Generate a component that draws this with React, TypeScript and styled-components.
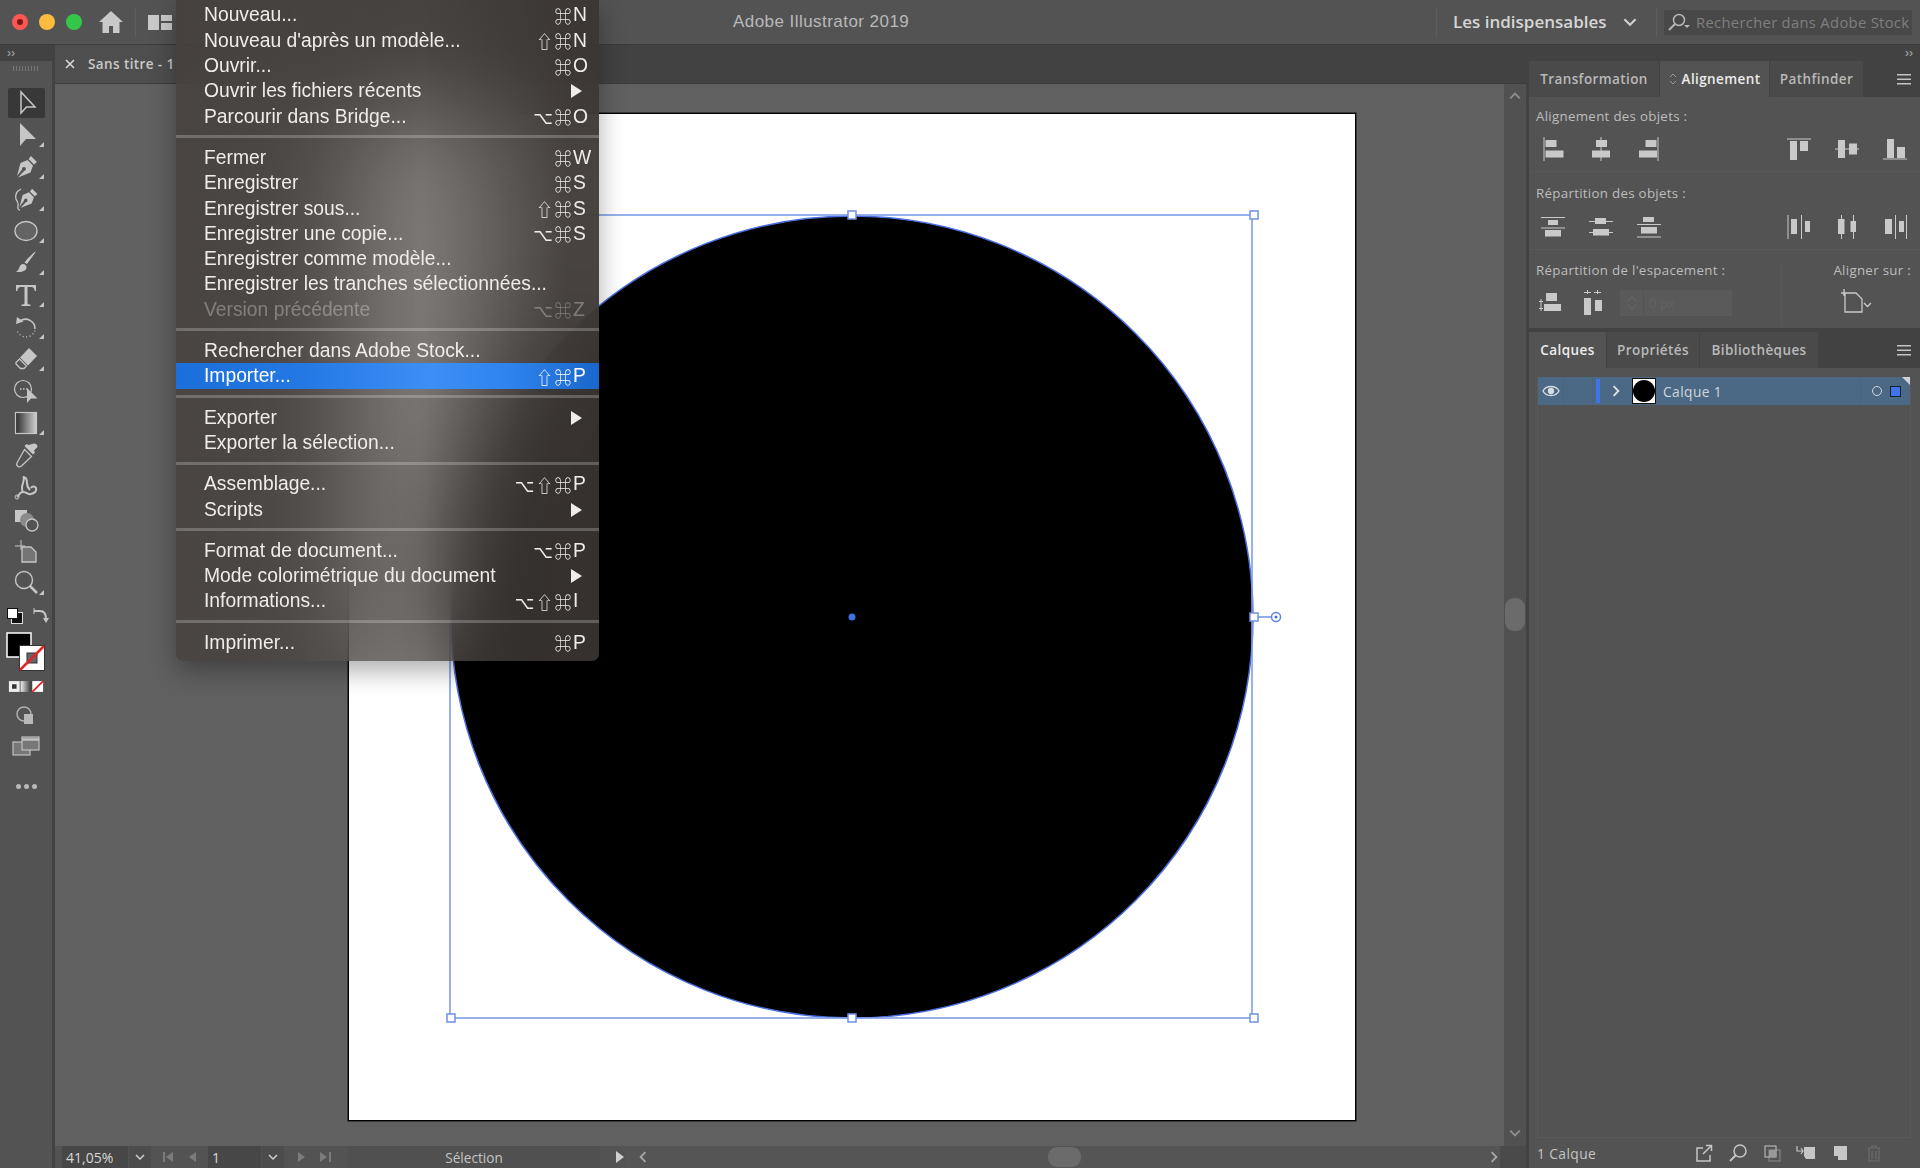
import React from 'react';
import styled, { createGlobalStyle } from 'styled-components';

const ICON = '#c6c6c6';

const GlobalStyle = createGlobalStyle`
  html, body { margin: 0; padding: 0; background: #535353; }
  * { box-sizing: border-box; }
`;

type MenuItem = { label: string; mods?: string; letter?: string; sub?: boolean; disabled?: boolean; active?: boolean };

const MENU: MenuItem[][] = [
  [
    { label: 'Nouveau...', mods: '⌘', letter: 'N' },
    { label: "Nouveau d'après un modèle...", mods: '⇧⌘', letter: 'N' },
    { label: 'Ouvrir...', mods: '⌘', letter: 'O' },
    { label: 'Ouvrir les fichiers récents', sub: true },
    { label: 'Parcourir dans Bridge...', mods: '⌥⌘', letter: 'O' },
  ],
  [
    { label: 'Fermer', mods: '⌘', letter: 'W' },
    { label: 'Enregistrer', mods: '⌘', letter: 'S' },
    { label: 'Enregistrer sous...', mods: '⇧⌘', letter: 'S' },
    { label: 'Enregistrer une copie...', mods: '⌥⌘', letter: 'S' },
    { label: 'Enregistrer comme modèle...' },
    { label: 'Enregistrer les tranches sélectionnées...' },
    { label: 'Version précédente', mods: '⌥⌘', letter: 'Z', disabled: true },
  ],
  [
    { label: 'Rechercher dans Adobe Stock...' },
    { label: 'Importer...', mods: '⇧⌘', letter: 'P', active: true },
  ],
  [
    { label: 'Exporter', sub: true },
    { label: 'Exporter la sélection...' },
  ],
  [
    { label: 'Assemblage...', mods: '⌥⇧⌘', letter: 'P' },
    { label: 'Scripts', sub: true },
  ],
  [
    { label: 'Format de document...', mods: '⌥⌘', letter: 'P' },
    { label: 'Mode colorimétrique du document', sub: true },
    { label: 'Informations...', mods: '⌥⇧⌘', letter: 'I' },
  ],
  [{ label: 'Imprimer...', mods: '⌘', letter: 'P' }],
];

const Page = styled.div`
  position: relative;
  width: 1920px;
  height: 1168px;
  overflow: hidden;
  display: flex;
  flex-direction: column;
  background: #3a3a3a;
  font-family: "Open Sans", "Liberation Sans", sans-serif;
`;

const TitleBar = styled.header`
  height: 45px;
  flex: none;
  display: flex;
  align-items: center;
  background: #535353;
  border-bottom: 1px solid #3c3c3c;
  padding-left: 12px;
`;

const Light = styled.span<{ $c: string; $dot?: boolean }>`
  width: 16px;
  height: 16px;
  border-radius: 50%;
  margin-right: 11px;
  background: ${p => p.$c};
  display: flex;
  align-items: center;
  justify-content: center;
  &::after {
    content: '';
    width: 6px;
    height: 6px;
    border-radius: 50%;
    background: ${p => (p.$dot ? '#7a1712' : 'transparent')};
  }
`;

const VRule = styled.span<{ $ml: number }>`
  width: 1px;
  height: 30px;
  flex: none;
  margin-left: ${p => p.$ml}px;
  background: #5d5d5d;
`;

const AppTitle = styled.div`
  margin-left: 561px;
  width: 180px;
  font-family: "Liberation Sans", sans-serif;
  font-size: 17px;
  letter-spacing: 0.45px;
  color: #b9b9b9;
  white-space: nowrap;
`;

const Workspace = styled.div`
  margin: 0 0 2px 16px;
  width: 170px;
  flex: none;
  font-size: 17px;
  font-weight: 600;
  color: #d6d6d6;
  white-space: nowrap;
`;

const SearchBox = styled.div`
  margin-left: 7px;
  width: 248px;
  height: 25px;
  flex: none;
  display: flex;
  align-items: center;
  gap: 5px;
  padding-left: 3px;
  background: #484848;
  border-radius: 2px;
  font-size: 14.8px;
  letter-spacing: 0.3px;
  color: #7f7f7f;
  white-space: nowrap;
  overflow: hidden;
`;

const Body = styled.div`
  flex: 1;
  min-height: 0;
  display: flex;
`;

const ToolBar = styled.aside`
  width: 55px;
  flex: none;
  display: flex;
  flex-direction: column;
  align-items: center;
  background: #535353;
  border-right: 3px solid #424242;
`;

const Collapse = styled.div<{ $align: string }>`
  align-self: stretch;
  height: 16px;
  flex: none;
  display: flex;
  align-items: center;
  justify-content: ${p => p.$align};
  padding: 0 7px;
  background: #424242;
  color: #b0b0b0;
  font-size: 12px;
  line-height: 1;
  font-family: "Liberation Sans", sans-serif;
`;

const Grip = styled.div`
  width: 26px;
  height: 5px;
  margin: 5px 0 16px;
  background: repeating-linear-gradient(90deg, #777 0 1px, transparent 1px 3px);
`;

const Tool = styled.div<{ $active?: boolean; $more?: boolean }>`
  position: relative;
  width: 37px;
  height: 30px;
  margin: 1px 0;
  flex: none;
  display: flex;
  align-items: center;
  justify-content: center;
  border-radius: 2px;
  background: ${p => (p.$active ? '#383838' : 'transparent')};
  &::after {
    content: ${p => (p.$more ? "''" : 'none')};
    position: absolute;
    right: 1px;
    bottom: 3px;
    border-style: solid;
    border-width: 0 0 5px 5px;
    border-color: transparent transparent #c6c6c6 transparent;
  }
`;

const SwapRow = styled.div`
  width: 45px;
  height: 22px;
  margin: 6px 0 0 5px;
  display: flex;
  align-items: center;
  justify-content: space-between;
`;

const ColorBlock = styled.svg`
  display: block;
  margin: 5px 0 0 2px;
  width: 44px;
  height: 42px;
`;

const ModeRow = styled.svg`
  display: block;
  margin-top: 6px;
  width: 36px;
  height: 13px;
`;

const DrawMode = styled.div<{ $mt: number }>`
  margin-top: ${p => p.$mt}px;
  height: 26px;
`;

const Dots = styled.div`
  margin-top: 24px;
  display: flex;
  gap: 3px;
  span {
    width: 5px;
    height: 5px;
    border-radius: 50%;
    background: #b8b8b8;
  }
`;

const Center = styled.main`
  flex: 1;
  min-width: 0;
  display: flex;
  flex-direction: column;
`;

const DocTabs = styled.div`
  height: 39px;
  flex: none;
  display: flex;
  background: #424242;
  border-bottom: 1px solid #3c3c3c;
`;

const DocTab = styled.div`
  width: 240px;
  display: flex;
  align-items: center;
  padding-left: 10px;
  gap: 13px;
  background: #4e4e4e;
  color: #c9c9c9;
  font-size: 13.5px;
  font-weight: 600;
  letter-spacing: 0.4px;
  white-space: nowrap;
`;

const CanvasRow = styled.div`
  flex: 1;
  min-height: 0;
  display: flex;
`;

const Canvas = styled.div`
  flex: 1;
  padding: 29px 0 0 293px;
  background: #606060;
`;

const Artboard = styled.div`
  width: 1008px;
  height: 1008px;
  background: #fff;
  border: 1px solid #000;
  box-shadow: 0 0 0 0.5px #111;
  svg { display: block; }
`;

const VScroll = styled.div`
  width: 22px;
  flex: none;
  display: flex;
  flex-direction: column;
  align-items: center;
  justify-content: space-between;
  padding: 6px 0 7px;
  background: #515151;
`;

const VThumb = styled.div`
  width: 20px;
  height: 33px;
  border-radius: 9px;
  background: #6b6b6b;
`;

const StatusBar = styled.footer`
  height: 22px;
  flex: none;
  display: flex;
  align-items: stretch;
  padding-left: 7px;
  background: #535353;
  color: #d8d8d8;
  font-size: 14px;
`;

const Field = styled.div<{ $w: number; $ml?: number }>`
  width: ${p => p.$w}px;
  margin-left: ${p => p.$ml || 0}px;
  display: flex;
  align-items: center;
  padding-left: 4px;
  background: #474747;
`;

const Drop = styled.div`
  width: 22px;
  margin-left: 1px;
  display: flex;
  align-items: center;
  justify-content: center;
  background: #4c4c4c;
`;

const Pager = styled.div<{ $w: number; $ml: number }>`
  width: ${p => p.$w}px;
  margin-left: ${p => p.$ml}px;
  display: flex;
  align-items: center;
  justify-content: space-between;
`;

const StateLabel = styled.div`
  width: 252px;
  margin-left: 17px;
  display: flex;
  align-items: center;
  justify-content: center;
  background: #505050;
  color: #c4c4c4;
  font-size: 13.6px;
`;

const HTrack = styled.div`
  flex: 1;
  display: flex;
  align-items: center;
  justify-content: space-between;
  padding-left: 12px;
  background: #555;
`;

const HThumb = styled.div`
  width: 33px;
  height: 20px;
  margin-left: -9px;
  border-radius: 9px;
  background: #6b6b6b;
`;

const HEnd = styled.div`
  width: 26px;
  align-self: stretch;
  background: #4a4a4a;
`;

const Dock = styled.aside`
  width: 394px;
  flex: none;
  display: flex;
  flex-direction: column;
  background: #424242;
  border-left: 3px solid #424242;
`;

const PanelTabs = styled.div`
  height: 36px;
  flex: none;
  display: flex;
  align-items: stretch;
  background: #424242;
`;

const PanelTab = styled.div<{ $w: number; $active?: boolean }>`
  width: ${p => p.$w}px;
  display: flex;
  align-items: center;
  justify-content: center;
  gap: 5px;
  margin-right: 1px;
  background: ${p => (p.$active ? '#535353' : '#4a4a4a')};
  color: ${p => (p.$active ? '#ececec' : '#b9b9b9')};
  font-size: 13.5px;
  font-weight: 600;
  letter-spacing: 0.4px;
  white-space: nowrap;
`;

const Hamburger = styled.svg`
  margin: auto 9px auto auto;
  width: 14px;
  height: 11px;
`;

const DockGap = styled.div`
  height: 4px;
  flex: none;
`;

const AlignPanel = styled.section`
  height: 231px;
  flex: none;
  display: flex;
  flex-direction: column;
  background: #535353;
`;

const AlignSection = styled.div<{ $h: number; $pt: number; $gap: number }>`
  height: ${p => p.$h}px;
  flex: none;
  padding-top: ${p => p.$pt}px;
  border-bottom: 1px solid #585858;
  & > div:first-child {
    margin-bottom: ${p => p.$gap}px;
  }
`;

const PanelLabel = styled.div`
  height: 18px;
  padding-left: 7px;
  line-height: 18px;
  font-size: 13.3px;
  letter-spacing: 0.3px;
  color: #bdbdbd;
  white-space: nowrap;
`;

const IconRow = styled.div`
  display: flex;
  gap: 22px;
  padding: 0 12px 0 11px;
  svg:nth-child(3) { margin-right: auto; }
`;

const SpacingRow = styled.div`
  display: flex;
  height: 78px;
  padding-top: 11px;
`;

const SpacingLeft = styled.div`
  width: 253px;
  flex: none;
  border-right: 1px solid #585858;
  height: 66px;
`;

const SpacingRight = styled.div`
  flex: 1;
  padding-right: 9px;
  text-align: right;
  svg { display: block; margin: 10px 0 0 58px; }
`;

const SpacingControls = styled.div`
  display: flex;
  align-items: center;
  margin-top: 11px;
  padding-left: 10px;
  gap: 13px;
  svg + svg { margin-left: 3px; }
`;

const SpinField = styled.div`
  width: 112px;
  height: 26px;
  display: flex;
  align-items: center;
  background: #5a5a5a;
  color: #636363;
  font-size: 13px;
  span:first-child {
    width: 24px;
    height: 100%;
    border-right: 1px solid #535353;
    display: flex;
    align-items: center;
    justify-content: center;
  }
  span:last-child { padding-left: 5px; }
`;

const LayersPanel = styled.section`
  flex: 1;
  min-height: 0;
  display: flex;
  flex-direction: column;
  background: #535353;
`;

const LayerList = styled.div`
  flex: 1;
  margin: 9px 9px 0 8px;
  border: 1px solid #595959;
  border-top: none;
`;

const LayerRow = styled.div`
  position: relative;
  height: 28px;
  display: flex;
  align-items: center;
  background: #4b6885;
  color: #d0d6dc;
  font-size: 13.8px;
  letter-spacing: 0.4px;
  &::after {
    content: '';
    position: absolute;
    top: 0;
    right: 0;
    border-style: solid;
    border-width: 0 8px 8px 0;
    border-color: transparent #cfd3d8 transparent transparent;
  }
`;

const LayerCell = styled.div<{ $w: number; $line?: boolean }>`
  width: ${p => p.$w}px;
  height: 100%;
  flex: none;
  display: flex;
  align-items: center;
  justify-content: center;
  border-right: ${p => (p.$line ? '1px solid #476380' : 'none')};
`;

const ColorBar = styled.span`
  width: 4px;
  height: 24px;
  margin-left: 3px;
  flex: none;
  background: #3f73e8;
`;

const Thumb = styled.span`
  width: 24px;
  height: 26px;
  flex: none;
  display: flex;
  align-items: center;
  justify-content: center;
  background: #fff;
  border: 1px solid #111;
  &::after {
    content: '';
    width: 22px;
    height: 22px;
    border-radius: 50%;
    background: #000;
  }
`;

const LayerName = styled.span`
  margin-left: 7px;
  flex: 1;
`;

const TargetRing = styled.span`
  width: 10px;
  height: 10px;
  margin: 0 8px 0 11px;
  flex: none;
  border-radius: 50%;
  border: 1px solid #d2d6da;
`;

const SelectSquare = styled.span`
  width: 11px;
  height: 11px;
  margin-right: 9px;
  flex: none;
  background: #3f73e8;
  border: 1px solid #15202e;
`;

const LayerDivider = styled.span`
  width: 1px;
  height: 100%;
  background: #476380;
`;

const LayersFooter = styled.div`
  height: 30px;
  flex: none;
  display: flex;
  align-items: center;
  padding: 0 36px 0 8px;
  color: #c4c4c4;
  font-size: 13.8px;
  letter-spacing: 0.4px;
`;

const FooterIcons = styled.div`
  margin-left: auto;
  display: flex;
  gap: 14px;
`;

const Menu = styled.nav`
  position: absolute;
  top: 0;
  left: 176px;
  width: 423px;
  padding: 2.35px 0 6px;
  background: linear-gradient(90deg, rgba(66, 60, 56, 0.74) 0%, rgba(66, 60, 56, 0.68) 58%, rgba(58, 53, 50, 0.93) 92%);
  backdrop-filter: blur(52px);
  border-radius: 0 0 7px 7px;
  box-shadow: 0 10px 26px rgba(0, 0, 0, 0.32);
  font-family: "Liberation Sans", sans-serif;
  font-size: 19.3px;
  color: #efecea;
`;

const MenuSep = styled.div`
  height: 16px;
  display: flex;
  align-items: center;
  &::after {
    content: '';
    flex: 1;
    height: 3px;
    background: rgba(255, 255, 255, 0.22);
  }
`;

const MenuRow = styled.div<{ $active?: boolean; $disabled?: boolean }>`
  height: 25.3px;
  display: flex;
  align-items: center;
  padding: 1px 0 0 28px;
  white-space: nowrap;
  background: ${p => (p.$active ? 'linear-gradient(90deg, #1b6fdb 0%, #2478e4 30%, #3c8ff6 60%, #2f84ee 78%, #1a67cc 100%)' : 'transparent')};
  color: ${p => (p.$active ? '#fff' : p.$disabled ? 'rgba(255,255,255,0.3)' : 'inherit')};
`;

const MenuLabel = styled.span`
  flex: 1;
`;

const Mods = styled.span`
  font-family: "Noto Sans CJK JP", "DejaVu Sans", sans-serif;
  font-size: 17px;
  letter-spacing: 1.500px;
`;

const KeyLetter = styled.span`
  width: 26px;
  flex: none;
`;

const SubArrow = styled.span`
  margin-right: 17px;
  border-style: solid;
  border-width: 7px 0 7px 11px;
  border-color: transparent transparent transparent #efecea;
`;

const Ico: React.FC<{ s?: number; children: React.ReactNode }> = ({ s = 28, children }) => (
  <svg width={s} height={s} viewBox={`0 0 ${s} ${s}`} fill={ICON}>
    {children}
  </svg>
);

const nib = 'M19 3l6 6-3 2.500-5.500-5.500zM15.500 7l5.500 5.500-2.500 7L6 24.500l6-6.500a2 2 0 1 0-2-1.500L5 23l3.500-13z';

const TOOLS: { icon: React.ReactNode; more?: boolean; active?: boolean }[] = [
  { active: true, icon: <Ico><path d="M9 3v21l5.500-6H23z" fill="none" stroke={ICON} strokeWidth="1.500" /></Ico> },
  { more: true, icon: <Ico><path d="M8 2v23l6-7h10z" /></Ico> },
  { more: true, icon: <Ico><path d={nib} /></Ico> },
  { more: true, icon: <Ico><path d={nib} transform="translate(3 1) scale(.9)" /><path d="M9 4c-4 2-6 6-5 10 1 3 3 4 2 7-.5 2 0 4 2 4" fill="none" stroke={ICON} strokeWidth="1.300" /></Ico> },
  { more: true, icon: <Ico><ellipse cx="14" cy="14" rx="11" ry="9.500" fill="#646464" stroke={ICON} strokeWidth="1.300" /></Ico> },
  { more: true, icon: <Ico><path d="M24 2c-2 4-7 10-9 13l-2.500-1.500C15 10 20 5 24 2zM11 15c2 0 3.500 1.500 3.500 3.500C14.500 21 11 23.500 4 23c2.500-1.500 2.500-3 3.500-5 .6-2 2-3 3.500-3z" /></Ico> },
  { more: true, icon: <Ico><path d="M4 4h20v6h-1.300c-.2-2.500-1.200-4-3.700-4h-3.500v16c0 1 .8 1.500 3 1.500V25H9.500v-1.500c2.200 0 3-.5 3-1.500V6H9c-2.500 0-3.500 1.500-3.700 4H4z" /></Ico> },
  { more: true, icon: <Ico><path d="M8 8a9.500 9.500 0 0 1 15 8" fill="none" stroke={ICON} strokeWidth="1.500" /><path d="M4 11l1-7 6.500 4.500z" /><path d="M23 17.500a9.500 9.500 0 0 1-18 0" fill="none" stroke={ICON} strokeWidth="1.300" strokeDasharray="1 2.500" /></Ico> },
  { more: true, icon: <Ico><path d="M17 3l8 8-9 9.500-8-8z" /><path d="M7.500 14l7 7-2.500 2.500H8.500L4 19v-1.500z" fill="none" stroke={ICON} strokeWidth="1.300" /></Ico> },
  { icon: <Ico><circle cx="11" cy="12" r="8.500" fill="none" stroke={ICON} strokeWidth="1.200" /><path d="M8 12h7" stroke={ICON} strokeWidth="1.500" strokeDasharray="1.500 1.500" /><path d="M15 11v15l4-4.500h6.500z" /></Ico> },
  { more: true, icon: <Ico><defs><linearGradient id="grad"><stop offset="0" stopColor="#2c2c2c" /><stop offset="1" stopColor="#d0d0d0" /></linearGradient></defs><rect x="3.500" y="3.500" width="21" height="21" fill="url(#grad)" stroke={ICON} strokeWidth="1.200" /></Ico> },
  { icon: <Ico><path d="M22 2.500a3.200 3.200 0 0 1 3.500 3.500l-3.500 3.500 1 2-2 2-8.500-8.500 2-2 2 1z" /><path d="M12.500 8.500l7 7-10 9.500c-1.500 1-3 1-4 0s-1-2.500 0-4z" fill="none" stroke={ICON} strokeWidth="1.300" /></Ico> },
  { icon: <Ico><path d="M5 24c3-2 2-5 6-5s4 3 8 2 6-3 5-6c-1-2-4-2-5 0M11 19c-2-3-1-6 0-9 .5-3 2-5 0-6 3 0 4 3 4 6 0 3 1 5 3 7" fill="none" stroke={ICON} strokeWidth="2" /><circle cx="5" cy="24" r="2" fill="none" stroke={ICON} /></Ico> },
  { icon: <Ico><rect x="3" y="5" width="12" height="12" /><circle cx="15" cy="15" r="7" fill="#8a8a8a" /><circle cx="20" cy="20" r="6" fill="#535353" stroke={ICON} strokeWidth="1.300" /></Ico> },
  { icon: <Ico><path d="M3 9h10M9 3v10" fill="none" stroke={ICON} strokeWidth="1" /><path d="M10 10h9l5 5v10H10z" fill="#757575" stroke={ICON} strokeWidth="1.300" /></Ico> },
  { more: true, icon: <Ico><circle cx="12" cy="11" r="8.500" fill="none" stroke={ICON} strokeWidth="1.400" /><path d="M18 17l7 7" stroke={ICON} strokeWidth="2.500" /></Ico> },
];

// each icon of the align panel: small rects x,y,w,h
type Bars = [number, number, number, number][];

const ALIGN: Bars[] = [
  [[3.500, 1, 1, 24], [5.500, 4, 11, 7], [5.500, 14.500, 18, 7]],
  [[12.500, 1, 1, 24], [8, 4, 11, 7], [4, 14.500, 18, 7]],
  [[21.500, 1, 1, 24], [9.500, 4, 11, 7], [3, 14.500, 18, 7]],
  [[1, 2.500, 24, 1], [4, 5, 7, 19], [14, 5, 8, 10]],
  [[1, 12.500, 24, 1], [4, 4, 7, 18], [15, 7.500, 8, 11]],
  [[1, 22.500, 24, 1], [5, 3, 7, 19], [15, 11, 8, 11]],
];

const DISTRIBUTE: Bars[] = [
  [[1, 3, 24, 1], [8, 6, 10, 5], [1, 13.500, 24, 1], [5, 16, 16, 6.500]],
  [[1, 7, 24, 1], [7, 4, 11, 6], [1, 18, 24, 1], [5, 15, 16, 6.500]],
  [[7, 3, 11, 5], [1, 10, 24, 1], [5, 13, 16, 6.500], [1, 22.500, 24, 1]],
  [[1.500, 1, 1, 24], [5, 5, 6, 15], [15, 1, 1, 24], [19, 7, 5, 11]],
  [[7, 1, 1, 24], [4, 5, 6.500, 15], [19, 1, 1, 24], [16.500, 7, 5.500, 11]],
  [[3, 5, 7, 15], [13, 1, 1, 24], [17, 7, 5, 11], [24, 1, 1, 24]],
];

const SPACE_V: Bars = [[1.500, 9, 1, 12], [0, 11, 4, 1], [0, 18, 4, 1], [7, 3, 11, 8], [5, 14, 17, 7]];
const SPACE_H: Bars = [[3, 8, 7, 17], [14, 10, 7, 11], [3, 2, 7, 1], [6, 0, 1, 4], [13, 2, 7, 1], [16, 0, 1, 4]];

const BarIcon: React.FC<{ rects: Bars }> = ({ rects }) => (
  <svg width="26" height="26" viewBox="0 0 26 26" fill="#c9c9c9">
    {rects.map(([x, y, w, h], i) => <rect key={i} x={x} y={y} width={w} height={h} />)}
  </svg>
);

const Chevron: React.FC<{ dir?: 'down' | 'up' | 'left' | 'right'; color?: string; size?: number }> = ({ dir = 'down', color = '#d0d0d0', size = 10 }) => {
  const d = { down: 'M1 3l4 4 4-4', up: 'M1 7l4-4 4 4', left: 'M7 1L3 5l4 4', right: 'M3 1l4 4-4 4' }[dir];
  return (
    <svg width={size} height={size} viewBox="0 0 10 10" fill="none" stroke={color} strokeWidth="1.500">
      <path d={d} />
    </svg>
  );
};

const BurgerLines = () => (
  <Hamburger viewBox="0 0 14 11" fill="#c4c4c4">
    <rect width="14" height="1.500" />
    <rect y="4.500" width="14" height="1.500" />
    <rect y="9" width="14" height="1.500" />
  </Hamburger>
);

const HANDLES: [number, number][] = [
  [103, 102], [504, 102], [906, 102],
  [103, 905], [504, 905], [906, 905],
  [906, 504],
];

const Drawing = () => (
  <svg width="1006" height="1006" viewBox="1 1 1006 1006">
    <circle cx="504" cy="504" r="401" fill="#000" stroke="#4a6fe0" strokeWidth="1.500" />
    <rect x="102" y="102" width="802" height="803" fill="none" stroke="#7f9ee8" strokeWidth="1.600" />
    <path d="M906 504h22" stroke="#6f90e4" strokeWidth="1.500" />
    <circle cx="928" cy="504" r="4.500" fill="#fff" stroke="#5d82e2" strokeWidth="1.500" />
    <circle cx="928" cy="504" r="1.500" fill="#3f6fe0" />
    {HANDLES.map(([x, y]) => (
      <rect key={`${x}-${y}`} x={x - 4} y={y - 4} width="8" height="8" fill="#fff" stroke="#6f90e4" strokeWidth="1.500" />
    ))}
    <circle cx="504" cy="504" r="3.500" fill="#3f6fe0" />
  </svg>
);

const App: React.FC = () => (
  <Page>
    <GlobalStyle />
    <TitleBar>
      <Light $c="#fc5753" $dot />
      <Light $c="#fdbc40" />
      <Light $c="#33c748" />
      <svg width="26" height="24" viewBox="0 0 26 24" fill="#c9c9c9" style={{ marginLeft: 5 }}>
        <path d="M13 1L1 12h3.500v11H11v-7h4v7h6.500V12H25z" />
      </svg>
      <VRule $ml={11} />
      <svg width="24" height="15" viewBox="0 0 24 15" fill="#c9c9c9" style={{ marginLeft: 12 }}>
        <rect width="11" height="15" />
        <rect x="13" width="11" height="6" />
        <rect x="13" y="8" width="11" height="7" />
      </svg>
      <AppTitle>Adobe Illustrator 2019</AppTitle>
      <VRule $ml={523} />
      <Workspace>Les indispensables</Workspace>
      <Chevron size={14} />
      <VRule $ml={19} />
      <SearchBox>
        <svg width="24" height="20" viewBox="0 0 24 20" fill="none" stroke="#b8b8b8" strokeWidth="1.500">
          <circle cx="12" cy="8" r="5.500" />
          <path d="M8 12l-6 6" strokeWidth="2" />
          <path d="M17 13h6l-3 3z" fill="#b8b8b8" stroke="none" />
        </svg>
        Rechercher dans Adobe Stock
      </SearchBox>
    </TitleBar>
    <Body>
      <ToolBar>
        <Collapse $align="flex-start">››</Collapse>
        <Grip />
        {TOOLS.map((t, i) => (
          <Tool key={i} $active={t.active} $more={t.more}>{t.icon}</Tool>
        ))}
        <SwapRow>
          <svg width="18" height="18" viewBox="0 0 18 18">
            <rect x="5.500" y="5.500" width="11" height="11" fill="#111" stroke="#ddd" />
            <rect x="1.500" y="1.500" width="10" height="10" fill="#fff" stroke="#111" />
          </svg>
          <svg width="18" height="18" viewBox="0 0 18 18" fill="none" stroke={ICON} strokeWidth="2">
            <path d="M1 4h6c4 0 6 2 6 8" />
            <path d="M10 11l3 5 3-5" fill={ICON} stroke="none" />
            <path d="M1 1v6" strokeWidth="1" />
          </svg>
        </SwapRow>
        <ColorBlock viewBox="0 0 44 42">
          <rect x="2" y="1" width="24" height="24" fill="#000" stroke="#fff" strokeWidth="1.500" />
          <rect x="14.500" y="13.500" width="25" height="25" fill="#fff" stroke="#333" />
          <rect x="22" y="21" width="10" height="10" fill="#666" stroke="#333" />
          <path d="M15 38L39 14" stroke="#e0242a" strokeWidth="2.500" />
        </ColorBlock>
        <ModeRow viewBox="0 0 40 14">
          <defs>
            <linearGradient id="mode"><stop offset="0" stopColor="#eee" /><stop offset="1" stopColor="#333" /></linearGradient>
          </defs>
          <rect x="1" y="1" width="12" height="12" fill="#eee" />
          <rect x="4.500" y="4.500" width="5" height="5" fill="#333" />
          <rect x="14" y="1" width="12" height="12" fill="url(#mode)" />
          <rect x="27" y="1" width="12" height="12" fill="#fff" />
          <path d="M27 13L39 1" stroke="#e0242a" strokeWidth="2" />
        </ModeRow>
        <DrawMode $mt={10}>
          <svg width="24" height="26" viewBox="0 0 24 26">
            <circle cx="10" cy="11" r="7" fill="none" stroke="#b0b0b0" strokeWidth="1.500" />
            <path d="M10 11h9v10H10z" fill="#b8b8b8" />
          </svg>
        </DrawMode>
        <DrawMode $mt={5}>
          <svg width="30" height="24" viewBox="0 0 30 24" fill="#777" stroke="#c0c0c0" strokeWidth="1.200">
            <rect x="2" y="8" width="17" height="13" />
            <rect x="11" y="3" width="17" height="13" />
            <path d="M11 5.500h17" strokeWidth="2.500" />
          </svg>
        </DrawMode>
        <Dots><span /><span /><span /></Dots>
      </ToolBar>
      <Center>
        <DocTabs>
          <DocTab>
            <svg width="10" height="10" viewBox="0 0 10 10" stroke="#ddd" strokeWidth="1.500"><path d="M1 1l8 8M9 1l-8 8" /></svg>
            Sans titre - 1
          </DocTab>
        </DocTabs>
        <CanvasRow>
          <Canvas>
            <Artboard>
              <Drawing />
            </Artboard>
          </Canvas>
          <VScroll>
            <Chevron dir="up" color="#8f8f8f" size={12} />
            <VThumb />
            <Chevron dir="down" color="#8f8f8f" size={12} />
          </VScroll>
        </CanvasRow>
        <StatusBar>
          <Field $w={66}>41,05%</Field>
          <Drop><Chevron /></Drop>
          <Pager $w={34} $ml={12}>
            <svg width="12" height="12" viewBox="0 0 12 12" fill="#7c7c7c"><rect x="0" y="1" width="2" height="10" /><path d="M10 1v10L3 6z" /></svg>
            <svg width="8" height="12" viewBox="0 0 8 12" fill="#7c7c7c"><path d="M7 1v10L0 6z" /></svg>
          </Pager>
          <Field $w={53} $ml={11}>1</Field>
          <Drop><Chevron /></Drop>
          <Pager $w={34} $ml={13}>
            <svg width="8" height="12" viewBox="0 0 8 12" fill="#7c7c7c"><path d="M1 1v10l7-5z" /></svg>
            <svg width="12" height="12" viewBox="0 0 12 12" fill="#7c7c7c"><path d="M1 1v10l7-5z" /><rect x="10" y="1" width="2" height="10" /></svg>
          </Pager>
          <StateLabel>Sélection</StateLabel>
          <svg width="10" height="22" viewBox="0 0 10 22" fill="#cfcfcf" style={{ marginLeft: 15 }}><path d="M1 5v12l8-6z" /></svg>
          <HTrack>
            <Chevron dir="left" color="#a8a8a8" size={12} />
            <HThumb />
            <Chevron dir="right" color="#a8a8a8" size={12} />
          </HTrack>
          <HEnd />
        </StatusBar>
      </Center>
      <Dock>
        <Collapse $align="flex-end">››</Collapse>
        <PanelTabs>
          <PanelTab $w={130}>Transformation</PanelTab>
          <PanelTab $w={109} $active>
            <svg width="8" height="12" viewBox="0 0 8 12" fill="none" stroke="#9a9a9a"><path d="M1 4l3-3 3 3M1 8l3 3 3-3" /></svg>
            Alignement
          </PanelTab>
          <PanelTab $w={93}>Pathfinder</PanelTab>
          <BurgerLines />
        </PanelTabs>
        <AlignPanel>
          <AlignSection $h={75} $pt={10} $gap={11}>
            <PanelLabel>Alignement des objets :</PanelLabel>
            <IconRow>{ALIGN.map((r, i) => <BarIcon key={i} rects={r} />)}</IconRow>
          </AlignSection>
          <AlignSection $h={78} $pt={12} $gap={12}>
            <PanelLabel>Répartition des objets :</PanelLabel>
            <IconRow>{DISTRIBUTE.map((r, i) => <BarIcon key={i} rects={r} />)}</IconRow>
          </AlignSection>
          <SpacingRow>
            <SpacingLeft>
              <PanelLabel>Répartition de l'espacement :</PanelLabel>
              <SpacingControls>
                <BarIcon rects={SPACE_V} />
                <BarIcon rects={SPACE_H} />
                <SpinField>
                  <span>
                    <svg width="10" height="16" viewBox="0 0 10 16" fill="none" stroke="#6a6a6a"><path d="M1 6l4-4 4 4M1 10l4 4 4-4" /></svg>
                  </span>
                  <span>0 px</span>
                </SpinField>
              </SpacingControls>
            </SpacingLeft>
            <SpacingRight>
              <PanelLabel>Aligner sur :</PanelLabel>
              <svg width="34" height="24" viewBox="0 0 34 24" fill="none" stroke="#c9c9c9" strokeWidth="1.300">
                <path d="M5 4h11l6 6v13H5zM1 4h7M4 0v7" />
                <path d="M24 14l3.500 3.500L31 14" />
              </svg>
            </SpacingRight>
          </SpacingRow>
        </AlignPanel>
        <DockGap />
        <PanelTabs>
          <PanelTab $w={77} $active>Calques</PanelTab>
          <PanelTab $w={92}>Propriétés</PanelTab>
          <PanelTab $w={118}>Bibliothèques</PanelTab>
          <BurgerLines />
        </PanelTabs>
        <LayersPanel>
          <LayerList>
            <LayerRow>
              <LayerCell $w={26} $line>
                <svg width="18" height="12" viewBox="0 0 18 12" fill="none" stroke="#d8dde2" strokeWidth="1.300">
                  <path d="M1 6c3-6 13-6 16 0-3 6-13 6-16 0z" />
                  <circle cx="9" cy="6" r="2.500" fill="#d8dde2" />
                </svg>
              </LayerCell>
              <LayerCell $w={29} $line />
              <ColorBar />
              <LayerCell $w={32}><Chevron dir="right" color="#e0e4e8" size={12} /></LayerCell>
              <Thumb />
              <LayerName>Calque 1</LayerName>
              <LayerDivider />
              <TargetRing />
              <SelectSquare />
            </LayerRow>
          </LayerList>
          <LayersFooter>
            1 Calque
            <FooterIcons>
              <Ico s={20}><path d="M9 5H3v13h13v-6M9 11l8-8M12 2.500h5.500V8" fill="none" stroke={ICON} strokeWidth="1.500" /></Ico>
              <Ico s={20}><circle cx="12" cy="8" r="6" fill="none" stroke={ICON} strokeWidth="1.500" /><path d="M8 12l-6 6" stroke={ICON} strokeWidth="2" /></Ico>
              <Ico s={20}><rect x="7" y="7" width="11" height="11" fill="none" stroke="#8e8e8e" /><rect x="3" y="3" width="11" height="11" fill="none" stroke={ICON} /><rect x="7" y="7" width="7" height="7" fill="#9a9a9a" /></Ico>
              <Ico s={20}><path d="M8 4h11v12H10l-2-3z" /><path d="M1 3v5h6M5 5l2 3-2 3" fill="none" stroke={ICON} strokeWidth="1.200" /></Ico>
              <Ico s={20}><path d="M4 3h13v14H8v-4H4z" /></Ico>
              <Ico s={20}><path d="M4 5h12M8 5V3h4v2M5 5v13h10V5M8 8v8M12 8v8" fill="none" stroke="#6d6d6d" strokeWidth="1.200" /></Ico>
            </FooterIcons>
          </LayersFooter>
        </LayersPanel>
      </Dock>
    </Body>
    <Menu>
      {MENU.map((section, si) => (
        <React.Fragment key={si}>
          {si > 0 && <MenuSep />}
          {section.map(item => (
            <MenuRow key={item.label} $active={item.active} $disabled={item.disabled}>
              <MenuLabel>{item.label}</MenuLabel>
              {item.mods && <Mods>{item.mods}</Mods>}
              {item.letter && <KeyLetter>{item.letter}</KeyLetter>}
              {item.sub && <SubArrow />}
            </MenuRow>
          ))}
        </React.Fragment>
      ))}
    </Menu>
  </Page>
);

export default App;
